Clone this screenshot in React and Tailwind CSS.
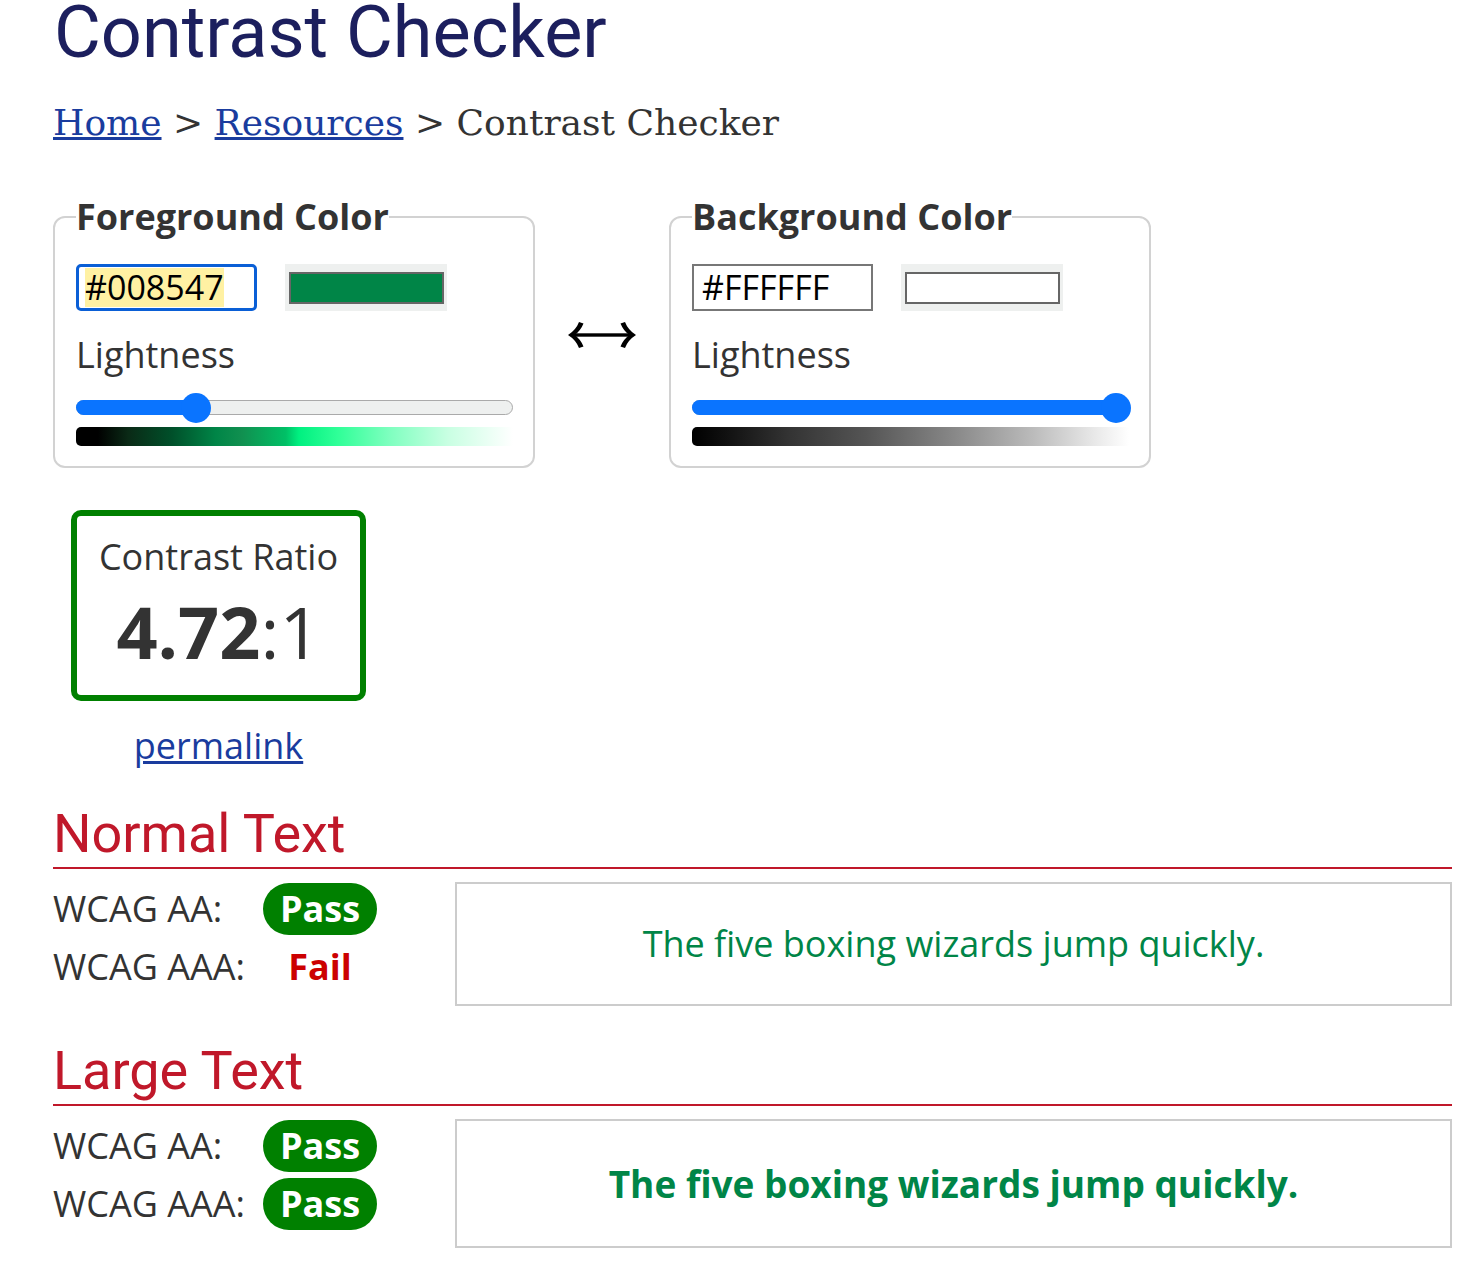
import React from 'react';

const fgGradient =
  'linear-gradient(to right, #000 0%, #000 5%, #0a2a16 12%, #00502a 22%, #008547 32%, #119050 38%, #00c066 48%, #00f080 51%, #30ff98 60%, #80ffc0 72%, #c8ffe2 85%, #ffffff 100%)';
const bgGradient =
  'linear-gradient(to right, #000 0%, #111 8%, #333 22%, #555 40%, #888 60%, #bbb 78%, #e8e8e8 92%, #ffffff 100%)';

function Slider({ pct }) {
  return (
    <div className="relative mt-[25px] h-[15px] w-[437px]">
      <div className="absolute inset-0 rounded-full border border-[#aaa] bg-[#eef0ef]" />
      <div
        className="absolute left-0 top-0 h-[15px] rounded-full bg-[#0a74ff]"
        style={{ width: `${pct}%` }}
      />
      <div
        className="absolute top-1/2 h-[30px] w-[30px] -translate-x-1/2 -translate-y-1/2 rounded-full bg-[#0a74ff]"
        style={{ left: `calc(${pct}% ${pct > 90 ? '- 13px' : '- 2px'})` }}
      />
    </div>
  );
}

function ColorPanel({ title, hex, focused, swatch, pct, gradient }) {
  return (
    <fieldset className="w-[482px] rounded-[12px] border-2 border-[#d2d2d2] pl-[21px] pr-[20px] pb-[20px]">
      <legend className="px-0 text-[36px] font-bold leading-[41px] text-[#333]">{title}</legend>
      <div className="mt-[27px] flex items-center gap-[28px]">
        {focused ? (
          <div className="flex h-[47px] w-[181px] items-center rounded-[5px] border-[3px] border-[#0a5fd6] pl-[6px]">
            <span className="bg-[#fff1a3] text-[34px] leading-[39px] text-black">{hex}</span>
          </div>
        ) : (
          <div className="flex h-[47px] w-[181px] items-center border-2 border-[#777] pl-[8px]">
            <span className="text-[34px] leading-[39px] text-black">{hex}</span>
          </div>
        )}
        <div className="flex h-[47px] w-[162px] items-center justify-center bg-[#eef0ef]">
          <div className="h-[32px] w-[155px] border-2 border-[#666]" style={{ backgroundColor: swatch }} />
        </div>
      </div>
      <div className="mt-[24px] text-[36px] leading-[40px] text-[#333]">Lightness</div>
      <Slider pct={pct} />
      <div
        className="mt-[12px] h-[19px] w-[437px] rounded-l-[5px]"
        style={{ backgroundImage: gradient }}
      />
    </fieldset>
  );
}

function Badge({ pass }) {
  if (pass) {
    return (
      <div className="flex h-[52px] w-[114px] items-center justify-center rounded-full bg-[#008000] text-[36px] font-bold text-white">
        Pass
      </div>
    );
  }
  return (
    <div className="flex h-[52px] w-[114px] items-center justify-center text-[36px] font-bold text-[#cc0000]">
      Fail
    </div>
  );
}

function Section({ title, aa, aaa, bold, boxH }) {
  return (
    <section>
      <h2 className="border-b-2 border-[#c0182a] pb-[4px] font-['Roboto',sans-serif] text-[54px] leading-[58px] text-[#c0182a]">
        {title}
      </h2>
      <div className="mt-[13px] flex">
        <div className="w-[402px] pt-px">
          <div className="flex h-[58px] items-start">
            <span className="w-[210px] text-[36px] leading-[52px] text-[#333]">WCAG AA:</span>
            <Badge pass={aa} />
          </div>
          <div className="flex h-[58px] items-start">
            <span className="w-[210px] text-[36px] leading-[52px] text-[#333]">WCAG AAA:</span>
            <Badge pass={aaa} />
          </div>
        </div>
        <div
          className={`flex flex-1 items-center justify-center border-2 border-[#ccc] text-[#008547] ${
            bold ? 'text-[37px] font-bold' : 'text-[36px]'
          }`}
          style={{ height: boxH }}
        >
          The five boxing wizards jump quickly.
        </div>
      </div>
    </section>
  );
}

function SwapArrow() {
  return (
    <svg width="68" height="26" viewBox="0 0 68 26" fill="#000">
      <rect x="4" y="11.3" width="60" height="3.4" />
      <path d="M0 13 Q8 8 11 0 L15.5 1.5 Q12.5 9 6.5 13 Q12.5 17 15.5 24.5 L11 26 Q8 18 0 13 Z" />
      <path d="M68 13 Q60 8 57 0 L52.5 1.5 Q55.5 9 61.5 13 Q55.5 17 52.5 24.5 L57 26 Q60 18 68 13 Z" />
    </svg>
  );
}

export default function App() {
  return (
    <div className="min-h-screen bg-white pl-[53px] pr-[30px] font-['Open_Sans',sans-serif] text-[#333]">
      <h1 className="-mt-[3px] ml-[1px] font-['Roboto',sans-serif] text-[72px] leading-[72px] text-[#1c1f5e]">
        Contrast Checker
      </h1>

      <nav className="mt-[33px] font-['DejaVu_Serif',serif] text-[36px] leading-[42px] text-[#333]">
        <a href="#" className="text-[#1a3c9e] underline">Home</a>
        {' > '}
        <a href="#" className="text-[#1a3c9e] underline">Resources</a>
        {' > Contrast Checker'}
      </nav>

      <div className="mt-[52px] flex items-start">
        <ColorPanel
          title="Foreground Color"
          hex="#008547"
          focused
          swatch="#008547"
          pct={28}
          gradient={fgGradient}
        />
        <div className="flex w-[134px] justify-center pt-[126px]">
          <SwapArrow />
        </div>
        <ColorPanel
          title="Background Color"
          hex="#FFFFFF"
          swatch="#ffffff"
          pct={100}
          gradient={bgGradient}
        />
      </div>

      <div className="ml-[18px] mt-[42px] w-[295px]">
        <div className="flex h-[191px] flex-col items-center rounded-[10px] border-[6px] border-[#008000] pt-[19px]">
          <div className="text-[36px] leading-[44px] text-[#333]">Contrast Ratio</div>
          <div className="mt-[10px] text-[72px] leading-[84px] text-[#333]">
            <span className="font-bold">4.72</span>:1
          </div>
        </div>
        <div className="mt-[23px] text-center">
          <a href="#" className="text-[36px] leading-[44px] text-[#1a3c9e] underline">permalink</a>
        </div>
      </div>

      <div className="mt-[37px]">
        <Section title="Normal Text" aa aaa={false} boxH={124} />
      </div>
      <div className="mt-[36px]">
        <Section title="Large Text" aa aaa bold boxH={129} />
      </div>
    </div>
  );
}
